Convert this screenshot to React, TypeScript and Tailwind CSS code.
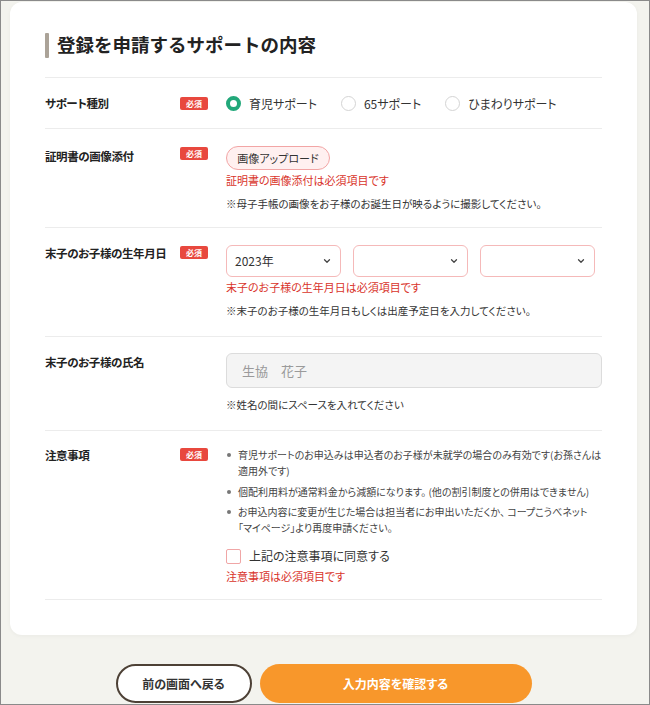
import { ChevronDown } from "lucide-react";

const font = { fontFamily: '"Noto Sans CJK JP", "Noto Sans", sans-serif' };

function Badge() {
    return (
        <span className="flex h-[13px] w-[28px] items-center justify-center rounded-[2px] bg-[#e8483e] text-[8px] font-bold leading-none text-white">
            必須
        </span>
    );
}

function Radio({ checked, label }: { checked?: boolean; label: string }) {
    return (
        <label className="flex items-center gap-[8px]">
            <span
                className={`h-[15px] w-[15px] rounded-full ${checked ? "border-[4px] border-[#22a87a] bg-white" : "border border-[#d4d4d4] bg-white"}`}
            />
            <span className="text-[12px] text-[#333]">{label}</span>
        </label>
    );
}

function Select({ value }: { value?: string }) {
    return (
        <div className="flex h-[32px] w-[115px] items-center justify-between rounded-md border border-[#f5b9b9] bg-white pl-[8px] pr-[8px] text-[12px] text-[#333]">
            <span>{value}</span>
            <ChevronDown size={10} strokeWidth={3} className="text-[#444]" />
        </div>
    );
}

function Row({ label, required, children, className }: { label: string; required?: boolean; children: React.ReactNode; className?: string }) {
    return (
        <div className={`flex border-b border-[#ececec] ${className ?? ""}`}>
            <div className="w-[135px] shrink-0 text-[11.5px] font-bold tracking-[-0.4px] text-[#222]">{label}</div>
            <div className="flex w-[46px] shrink-0 items-start pt-[1px]">{required && <Badge />}</div>
            <div className="flex-1">{children}</div>
        </div>
    );
}

const notes: React.ReactNode[] = [
    "育児サポートのお申込みは申込者のお子様が未就学の場合のみ有効です(お孫さんは適用外です)",
    "個配利用料が通常料金から減額になります。 (他の割引制度との併用はできません)",
    <>
        お申込内容に変更が生じた場合は担当者にお申出いただくか、 コープこうべネット
        <br />
        「マイページ」より再度申請ください。
    </>,
];

export default function App() {
    return (
        <div className="h-[705px] w-[650px] overflow-hidden border border-[#8a8a8a] bg-[#f3f3ee] [font-feature-settings:'palt']" style={font}>
            <div className="ml-[9px] mt-[1px] w-[627px] rounded-xl bg-white px-[35px] pb-[35px] pt-[28px] shadow-[0_1px_4px_rgba(0,0,0,0.04)]">
                <div className="mb-[17px] flex h-[30px] items-center">
                    <span className="h-[25px] w-[4px] rounded-[1px] bg-[#aba398]" />
                    <h2 className="ml-[8px] text-[18.5px] font-bold text-[#222] [font-feature-settings:normal]">登録を申請するサポートの内容</h2>
                </div>

                <div className="border-t border-[#ececec]">
                    <Row label="サポート種別" required className="items-center py-[17.5px] leading-[15px]">
                        <div className="flex items-center gap-[24px]">
                            <Radio checked label="育児サポート" />
                            <Radio label="65サポート" />
                            <Radio label="ひまわりサポート" />
                        </div>
                    </Row>

                    <Row label="証明書の画像添付" required className="pb-[16px] pt-[17px] leading-[20px]">
                        <div className="flex h-[24px] w-[104px] items-center justify-center rounded-full border border-[#f2a5a5] bg-[#fff0f0] text-[11px] text-[#333]">
                            画像アップロード
                        </div>
                        <p className="mt-[3px] text-[11px] leading-[14px] text-[#d9342b]">証明書の画像添付は必須項目です</p>
                        <p className="mt-[10px] text-[10.5px] leading-[14px] text-[#333]">※母子手帳の画像をお子様のお誕生日が映るように撮影してください。</p>
                    </Row>

                    <Row label="末子のお子様の生年月日" required className="pb-[18px] pt-[17px] leading-[16px]">
                        <div className="flex gap-[12px]">
                            <Select value="2023年" />
                            <Select />
                            <Select />
                        </div>
                        <p className="mt-[3px] text-[11px] leading-[14px] text-[#d9342b]">末子のお子様の生年月日は必須項目です</p>
                        <p className="mt-[10px] text-[10.5px] leading-[14px] text-[#333]">※末子のお子様の生年月日もしくは出産予定日を入力してください。</p>
                    </Row>

                    <Row label="末子のお子様の氏名" className="pb-[18px] pt-[16px] leading-[18px]">
                        <div className="flex h-[35px] w-full items-center rounded-md border border-[#dcdcdc] bg-[#f4f4f4] pl-[15px] text-[13px] text-[#9a9a9a]">
                            生協　花子
                        </div>
                        <p className="mt-[10px] text-[10.5px] leading-[14px] text-[#333]">※姓名の間にスペースを入れてください</p>
                    </Row>

                    <Row label="注意事項" required className="pb-[16px] pt-[16px] leading-[16px]">
                        <ul className="flex flex-col gap-[4.5px]">
                            {notes.map((n, i) => (
                                <li key={i} className="flex text-[10px] leading-[16px] text-[#444]">
                                    <span className="mr-[7px] ml-[1px] mt-[6px] h-[4px] w-[4px] shrink-0 rounded-full bg-[#777]" />
                                    <span>{n}</span>
                                </li>
                            ))}
                        </ul>
                        <label className="mt-[12px] flex items-center gap-[8px]">
                            <span className="h-[15px] w-[15px] rounded-[2px] border-[1.5px] border-[#f0a6a6] bg-white" />
                            <span className="text-[12px] text-[#333]">上記の注意事項に同意する</span>
                        </label>
                        <p className="mt-[5px] text-[11px] leading-[14px] text-[#d9342b]">注意事項は必須項目です</p>
                    </Row>
                </div>
            </div>

            <div className="ml-[9px] mt-[29px] flex w-[627px] justify-center gap-[8px]">
                <button className="h-[39px] w-[136px] rounded-full border-2 border-[#4d4136] bg-white text-[12px] font-bold text-[#333]">
                    前の画面へ戻る
                </button>
                <button className="h-[39px] w-[272px] rounded-full bg-[#f8972b] text-[12px] font-bold text-white">
                    入力内容を確認する
                </button>
            </div>
        </div>
    );
}
